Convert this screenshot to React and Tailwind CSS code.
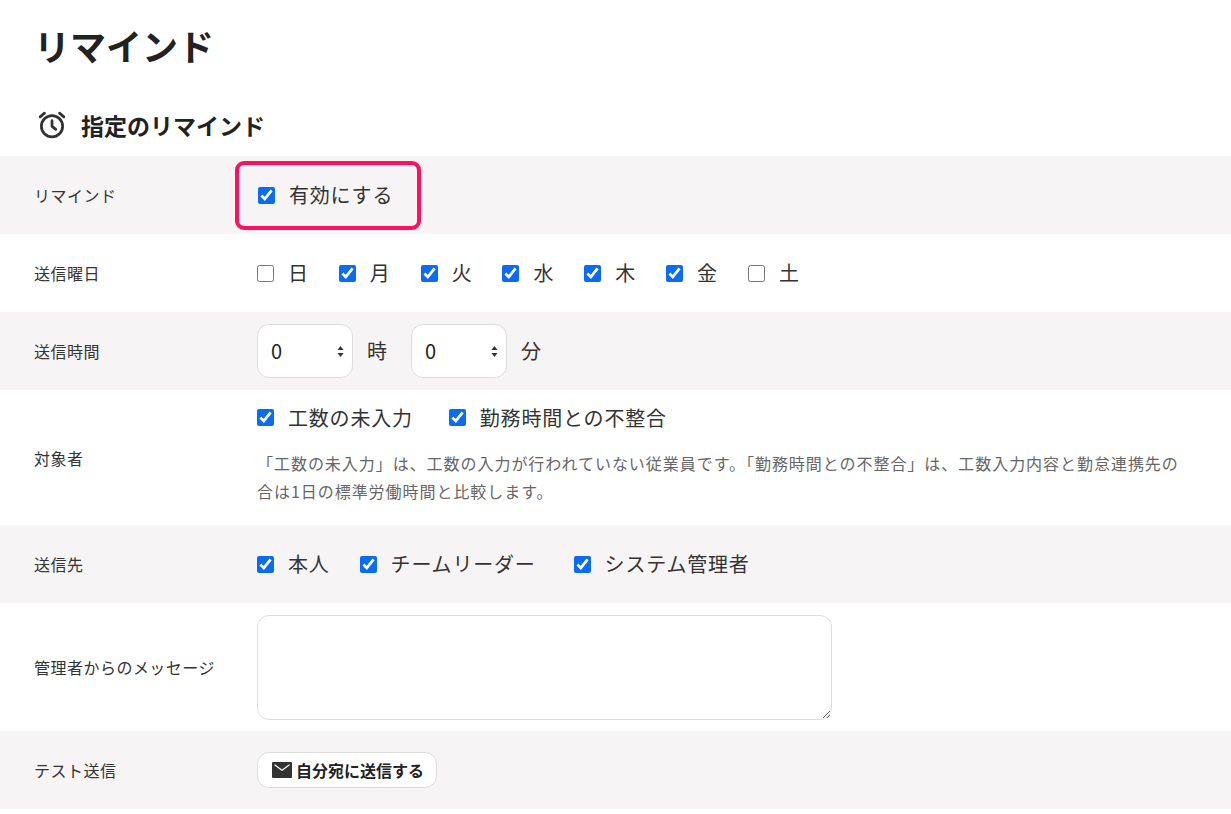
const font = { fontFamily: '"Noto Sans CJK JP", "Noto Sans", sans-serif' };

const Check = ({ checked, label, className = '' }) => (
  <label className={`flex items-center gap-[14px] text-[20px] tracking-[0.04em] text-[#333] ${className}`}>
    <input type="checkbox" defaultChecked={checked} className="w-[17px] h-[17px] m-0 accent-[#0b6bf2]" />
    <span>{label}</span>
  </label>
);

const Row = ({ label, gray, h, children }) => (
  <div className={`flex items-center ${h} ${gray ? 'bg-[#f6f4f4]' : 'bg-white'}`}>
    <div className="w-[257px] shrink-0 pl-[34px] text-[16px] tracking-[0.03em] text-[#333]">{label}</div>
    <div className="flex-1 min-w-0">{children}</div>
  </div>
);

const Select = () => (
  <div className="relative w-[96px] h-[54px] bg-white border border-[#ddd] rounded-xl flex items-center pl-[13px] text-[20px] text-[#222]">
    0
    <svg className="absolute right-[8px] top-[20px]" width="7" height="13" viewBox="0 0 7 13">
      <path d="M3.5 1 L6.5 5 H0.5 Z M3.5 12 L6.5 8 H0.5 Z" fill="#333" />
    </svg>
  </div>
);

export default function App() {
  return (
    <div style={font} className="w-[1231px] h-[814px] overflow-hidden bg-white">
      <h1 className="pl-[34px] pt-[20px] text-[36px] font-bold text-[#222] leading-[50px]">リマインド</h1>
      <div className="flex items-center gap-[14px] pl-[37px] mt-[40px] h-[30px]">
        <svg width="30" height="30" viewBox="0 0 24 24" fill="none" stroke="#333" strokeWidth="2.2" strokeLinecap="round">
          <circle cx="12" cy="13" r="8.5" />
          <path d="M12 8.5V13l3 2.5" />
          <path d="M2.5 5.5 6 2.5M21.5 5.5 18 2.5" />
        </svg>
        <h2 className="text-[23px] font-bold text-[#222]">指定のリマインド</h2>
      </div>
      <div className="mt-[16px]">
        <Row label="リマインド" gray h="h-[78px]">
          <div className="inline-flex items-center ml-[-22px] border-4 border-[#ff0f5f] rounded-[9px] h-[69px] w-[186px] pl-[19px]">
            <Check checked label="有効にする" />
          </div>
        </Row>
        <Row label="送信曜日" h="h-[78px]">
          <div className="flex items-center gap-[30px]">
            {[['日', false], ['月', true], ['火', true], ['水', true], ['木', true], ['金', true], ['土', false]].map(([d, c]) => (
              <Check key={d} checked={c} label={d} className="gap-[12px]" />
            ))}
          </div>
        </Row>
        <Row label="送信時間" gray h="h-[78px]">
          <div className="flex items-center gap-[14px] text-[20px] text-[#333]">
            <Select /><span className="mr-[10px]">時</span><Select /><span>分</span>
          </div>
        </Row>
        <Row label="対象者" h="h-[135px]">
          <div className="flex gap-[36px] mt-[-8px]">
            <Check checked label="工数の未入力" />
            <Check checked label="勤務時間との不整合" />
          </div>
          <p className="mt-[16px] text-[16px] leading-[28px] tracking-[0.06em] text-[#666] whitespace-nowrap overflow-hidden">
            「工数の未入力」は、工数の入力が行われていない従業員です。「勤務時間との不整合」は、工数入力内容と勤怠連携先の
            <br />
            合は1日の標準労働時間と比較します。
          </p>
        </Row>
        <Row label="送信先" gray h="h-[78px]">
          <div className="flex gap-[30px]">
            <Check checked label="本人" />
            <Check checked label="チームリーダー" className="mr-[8px]" />
            <Check checked label="システム管理者" />
          </div>
        </Row>
        <Row label="管理者からのメッセージ" h="h-[128px]">
          <textarea className="block w-[575px] h-[105px] border border-[#ddd] rounded-xl bg-white" />
        </Row>
        <Row label="テスト送信" gray h="h-[78px]">
          <button className="flex items-center gap-[2px] h-[36px] px-[12px] bg-white border border-[#ddd] rounded-xl text-[16px] font-bold text-[#222]">
            <svg width="24" height="24" viewBox="0 0 24 24"><path fill="#333" d="M3 4h18a1 1 0 0 1 1 1v14a1 1 0 0 1-1 1H3a1 1 0 0 1-1-1V5a1 1 0 0 1 1-1Zm1.5 3.5L12 13l7.5-5.5V6L12 11.5 4.5 6Z" /></svg>
            自分宛に送信する
          </button>
        </Row>
      </div>
    </div>
  );
}
